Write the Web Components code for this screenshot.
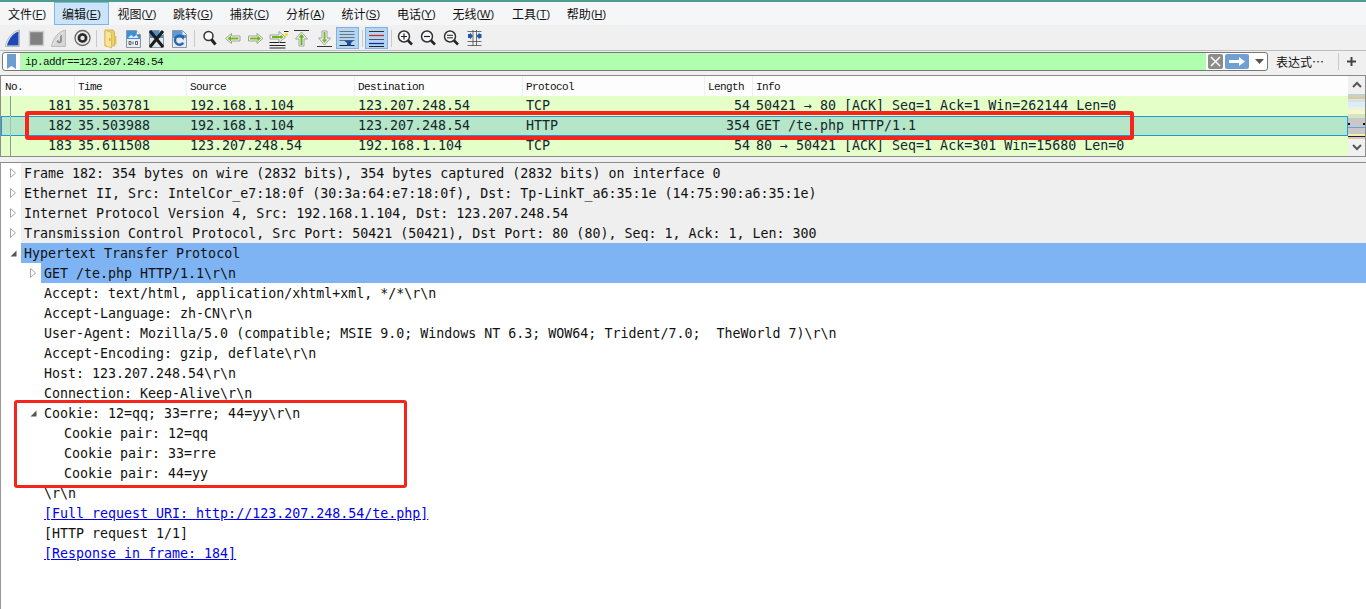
<!DOCTYPE html>
<html><head><meta charset="utf-8"><style>
html,body{margin:0;padding:0;background:#f0f0f0;overflow:hidden}
ws-app{font-family:"DejaVu Sans Mono",monospace}
</style></head><body>
<ws-app>
<ws-menubar>
<ws-menu key="F" style="margin-right:0">文件</ws-menu><ws-menu key="E" active>编辑</ws-menu><ws-menu key="V">视图</ws-menu><ws-menu key="G">跳转</ws-menu><ws-menu key="C">捕获</ws-menu><ws-menu key="A">分析</ws-menu><ws-menu key="S">统计</ws-menu><ws-menu key="Y">电话</ws-menu><ws-menu key="W" style="margin-right:1.8px">无线</ws-menu><ws-menu key="T">工具</ws-menu><ws-menu key="H">帮助</ws-menu>
</ws-menubar>
<ws-toolbar></ws-toolbar>
<ws-filter value="ip.addr==123.207.248.54"></ws-filter>
<ws-packets>
<ws-packet no="181" time="35.503781" src="192.168.1.104" dst="123.207.248.54" proto="TCP" len="54" info="50421 → 80 [ACK] Seq=1 Ack=1 Win=262144 Len=0"></ws-packet>
<ws-packet selected no="182" time="35.503988" src="192.168.1.104" dst="123.207.248.54" proto="HTTP" len="354" info="GET /te.php HTTP/1.1"></ws-packet>
<ws-packet no="183" time="35.611508" src="123.207.248.54" dst="192.168.1.104" proto="TCP" len="54" info="80 → 50421 [ACK] Seq=1 Ack=301 Win=15680 Len=0"></ws-packet>
</ws-packets>
<ws-tree>
<ws-row level="0" arrow="closed" shade>Frame 182: 354 bytes on wire (2832 bits), 354 bytes captured (2832 bits) on interface 0</ws-row>
<ws-row level="0" arrow="closed" shade>Ethernet II, Src: IntelCor_e7:18:0f (30:3a:64:e7:18:0f), Dst: Tp-LinkT_a6:35:1e (14:75:90:a6:35:1e)</ws-row>
<ws-row level="0" arrow="closed" shade>Internet Protocol Version 4, Src: 192.168.1.104, Dst: 123.207.248.54</ws-row>
<ws-row level="0" arrow="closed" shade>Transmission Control Protocol, Src Port: 50421 (50421), Dst Port: 80 (80), Seq: 1, Ack: 1, Len: 300</ws-row>
<ws-row level="0" arrow="open" hl>Hypertext Transfer Protocol</ws-row>
<ws-row level="1" arrow="closed" hl>GET /te.php HTTP/1.1\r\n</ws-row>
<ws-row level="1">Accept: text/html, application/xhtml+xml, */*\r\n</ws-row>
<ws-row level="1">Accept-Language: zh-CN\r\n</ws-row>
<ws-row level="1">User-Agent: Mozilla/5.0 (compatible; MSIE 9.0; Windows NT 6.3; WOW64; Trident/7.0;  TheWorld 7)\r\n</ws-row>
<ws-row level="1">Accept-Encoding: gzip, deflate\r\n</ws-row>
<ws-row level="1">Host: 123.207.248.54\r\n</ws-row>
<ws-row level="1">Connection: Keep-Alive\r\n</ws-row>
<ws-row level="1" arrow="open">Cookie: 12=qq; 33=rre; 44=yy\r\n</ws-row>
<ws-row level="2">Cookie pair: 12=qq</ws-row>
<ws-row level="2">Cookie pair: 33=rre</ws-row>
<ws-row level="2">Cookie pair: 44=yy</ws-row>
<ws-row level="1">\r\n</ws-row>
<ws-row level="1" link>[Full request URI: http://123.207.248.54/te.php]</ws-row>
<ws-row level="1">[HTTP request 1/1]</ws-row>
<ws-row level="1" link>[Response in frame: 184]</ws-row>
</ws-tree>
<ws-note style="left:25px;top:109px;width:1109px;height:29px;border-width:4px"></ws-note>
<ws-note style="left:14px;top:398px;width:393px;height:88px"></ws-note>
</ws-app>
<script>
function def(name, css, html){
  customElements.define(name, class extends HTMLElement{
    constructor(){super();this.attachShadow({mode:'open'});}
    connectedCallback(){
      const h = typeof html==='function'?html(this):html;
      this.shadowRoot.innerHTML='<style>'+css+'</style>'+h;
    }
  });
}
def('ws-app',`:host{display:flex;flex-direction:column;position:relative;width:1366px;height:609px;overflow:hidden;background:#f0f0f0;border-top:2px solid #4d9c8e;box-sizing:border-box}`,`<slot></slot>`);
def('ws-menubar',`:host{display:flex;height:23px;background:#f5f6f7;flex:none;align-items:stretch;box-sizing:border-box}`,`<slot></slot>`);
def('ws-menu',`:host{display:flex;align-items:center;padding:0 8px;margin-right:.8px;font:12px "Noto Sans CJK SC",sans-serif;color:#111;box-sizing:border-box;white-space:pre}
:host([active]){background:#cce4f7;outline:1px solid #7fb6e2;outline-offset:-1px}
.p{font:11px "Liberation Sans",sans-serif}
u{text-underline-offset:1px}`,
 e=>`<slot></slot><span class="p">(<u>${e.getAttribute('key')}</u>)</span>`);
const I={
fin:`<path d="M3.500 19.500C5 11 10 5 17.500 3V19.500Z" fill="#e8ecf0" stroke="#b4bcc4"/><path d="M5 18.500C7 11 11 6.500 16.500 4.500V18.500Z" fill="#2146b8"/>`,
stop:`<rect x="4.500" y="4.500" width="14" height="14" fill="#808080" stroke="#cfcfcf" stroke-width="1.500"/>`,
restart:`<path d="M3.500 19.500C5 11 10 5 17.500 3V19.500Z" fill="#d6d6d6" stroke="#bdbdbd"/><path d="M13 7.500v6c0 2.500-3.500 2.500-4-.5" stroke="#8a8a8a" stroke-width="1.800" fill="none"/><path d="M5 18L15 5" stroke="#eee"/>`,
opts:`<circle cx="11.500" cy="11" r="7.500" fill="#f2f2f2" stroke="#666" stroke-width="1.300"/><circle cx="11.500" cy="11" r="5" fill="#2a2a2a"/><circle cx="11.500" cy="11" r="5" fill="none" stroke="#bbb" stroke-dasharray="1.500 1.500" stroke-width=".8"/><circle cx="11.500" cy="11" r="2.200" fill="#e8e8e8"/>`,
open:`<path d="M6 3h8l1.500 2v14H6Z" fill="#edcf6a" stroke="#d6b458"/><path d="M6 3l6.500 2.500V21L6 18.500Z" fill="#f8e59a" stroke="#dcbc5c"/><path d="M15.500 9h2v8.500h-2Z" fill="#e6c25a"/><rect x="10" y="11" width="1.500" height="3" fill="#d9ae44"/>`,
save:`<path d="M4.500 3.500h10l4 4v13h-14Z" fill="#e6ebef" stroke="#8b98a2"/><path d="M5 4h9.500v4H18v4H5Z" fill="#3f8fd6"/><path d="M6 11l3-3 2.500 2 3-2 2 3Z" fill="#dcedfa"/><path d="M14.500 3.500v4h4" fill="#fff" stroke="#8b98a2"/><rect x="6" y="13.500" width="11" height="5" fill="#f4f6f7"/><path d="M7 14.500v3h2v-3ZM11 14.500v3M13.500 14.500v3h2v-3Z" fill="none" stroke="#445" stroke-width=".9"/>`,
close:`<path d="M4.500 3.500h10l4 4v13h-14Z" fill="#dfe6ec" stroke="#8b98a2"/><path d="M5 4h9.500v4H18v3H5Z" fill="#4f8fca"/><path d="M5 4L18 20M18 4L5 20" stroke="#1c1c1c" stroke-width="3"/>`,
reload:`<path d="M4.500 3.500h10l4 4v13h-14Z" fill="#e6ebef" stroke="#8b98a2"/><path d="M5 4h9.500v4H18v3H5Z" fill="#5d9ad8"/><path d="M15.500 11.200a4.500 4.500 0 1 0-.3 4.500" fill="none" stroke="#2a66b4" stroke-width="2.500"/><path d="M11.500 8.500l4.500-.5-.3 5Z" fill="#2a66b4"/>`,
find:`<circle cx="10.500" cy="9" r="4.500" fill="#f6f8f9" stroke="#333" stroke-width="1.500"/><path d="M13.500 12.500l4 5" stroke="#222" stroke-width="3"/>`,
back:`<path d="M4.500 11.500l6-5v2.500h8.500v5H10.500v2.500Z" fill="#f8f8f4" stroke="#a0a298"/><path d="M6.500 11.500l3.500-3v2h7.500v2H10v2Z" fill="#6cb81c"/>`,
fwd:`<path d="M19 11.500l-6-5v2.500H4.500v5H13v2.500Z" fill="#f8f8f4" stroke="#a0a298"/><path d="M17 11.500l-3.500-3v2H6v2h7.500v2Z" fill="#6cb81c"/>`,
goto:`<path d="M2.500 15.500h16M2.500 18.500h16M2.500 21h16" stroke="#222"/><path d="M3 8h9V4.500l6.500 5.500-6.500 5.500V12H3Z" fill="#f8f8f4" stroke="#a0a298"/><path d="M5 9h8.500V7.500l3 2.500-3 2.500V11H5Z" fill="#6cb81c"/><rect x="18" y="6" width="3" height="3" fill="#f4df3c"/><path d="M17 4.500h4.500" stroke="#222"/>`,
up:`<path d="M4 3.500h15" stroke="#333"/><path d="M11.500 5l6 7h-3.500v7H9v-7H5.500Z" fill="#f8f8f4" stroke="#a0a298"/><path d="M11.500 7l3 3.500h-2V18h-2v-7.500h-2Z" fill="#5fb21c"/>`,
down:`<path d="M4 19.500h15" stroke="#333"/><path d="M11.500 18l6-7h-3.500V4H9v7H5.500Z" fill="#f8f8f4" stroke="#a0a298"/><path d="M11.500 16l3-3.500h-2V5h-2v7.500h-2Z" fill="#7cb244"/>`,
auto:`<path d="M3.500 4.500h15M3.500 7.500h15M3.500 10.500h15M3.500 13.500h15" stroke="#6c7278"/><path d="M3.500 18.500h15" stroke="#222"/><path d="M8 13.500h9.500L15 16v2.500h-4V16Z" fill="#1d4f9c"/>`,
color:`<path d="M4 4.500h15" stroke="#333"/><path d="M4 8.500h15" stroke="#cc2b2b" stroke-width="1.300"/><path d="M4 12.500h15" stroke="#555"/><path d="M4 16.500h15" stroke="#23279c" stroke-width="1.300"/><path d="M4 19.500h15" stroke="#222"/>`,
zin:`<circle cx="10" cy="9.500" r="5.500" fill="#f7f9fa" stroke="#333" stroke-width="1.500"/><path d="M7 9.500h6M10 6.500v6" stroke="#222" stroke-width="1.200"/><path d="M14 13.500l4 4" stroke="#222" stroke-width="2.500"/>`,
zout:`<circle cx="10" cy="9.500" r="5.500" fill="#f7f9fa" stroke="#333" stroke-width="1.500"/><path d="M7 9.500h6" stroke="#222" stroke-width="1.200"/><path d="M14 13.500l4 4" stroke="#222" stroke-width="2.500"/>`,
znorm:`<circle cx="10" cy="9.500" r="5.500" fill="#f7f9fa" stroke="#333" stroke-width="1.500"/><path d="M7 8.300h6M7 10.800h6" stroke="#222"/><path d="M14 13.500l4 4" stroke="#222" stroke-width="2.500"/>`,
resize:`<path d="M4.500 4.500h14M4.500 14.500h14M4.500 18.500h14M10 3v16M13.500 3v16" stroke="#444" stroke-opacity=".75"/><path d="M5 7h2V5.500l3 3.500-3 3.500V11H5Z M18.500 7h-2V5.500l-3 3.500 3 3.500V11h2Z" fill="#1d5aa8"/>`
};
def('ws-toolbar',`:host{display:flex;align-items:center;height:26px;flex:none;box-sizing:border-box;padding:1px 0 0 2px;background:#f0f0f0;border-bottom:1px solid #bdbdbd}
.b{width:23px;height:22px;flex:none;display:flex;align-items:center;justify-content:center;box-sizing:border-box}
.b svg{width:23px;height:22px;display:block;flex:none}
.on{background:#b4d6f5;outline:1px solid #7fb0e0;outline-offset:-1px}
.s{width:1px;height:17px;background:#c9c9c9;margin:0 2.500px;flex:none}
.s.n{margin:0 2px}
.s.w{margin:0 3px}`,
()=>{const seq=['fin','stop','restart','opts','||','open','save','close','reload','|w','find','back','fwd','goto','up','down','auto*','|','color*','|','zin','zout','znorm','resize'];
return seq.map(k=>{if(k==='|')return '<i class="s"></i>';if(k==='|w')return '<i class="s w"></i>';if(k==='||')return '<i class="s n"></i>';const on=k.endsWith('*');k=k.replace('*','');
return `<div class="b${on?' on':''}"><svg viewBox="0 0 23 22">${I[k]}</svg></div>`}).join('')});
def('ws-filter',`:host{display:flex;align-items:center;height:24px;flex:none;box-sizing:border-box;padding:1px 0 4px 2px;background:#f0f0f0}
.box{flex:none;width:1266px;height:19px;box-sizing:border-box;border:1px solid #777;border-radius:3px;background:#fff;display:flex;align-items:center;overflow:hidden}
.bm{width:18px;display:flex;justify-content:center;flex:none;border-right:1px solid #ddd;height:100%;align-items:center;box-sizing:border-box}
.txt{flex:1;align-self:stretch;background:#afffaf;font:11px/19px "Liberation Mono",monospace;letter-spacing:-.6px;padding-left:4px;color:#111}
.x{width:15px;height:15px;background:#8c8c88;border-radius:2px;margin:0 2px;flex:none}
.go{width:24px;height:15px;background:#6f9fd3;border-radius:2px;flex:none;margin-right:2px}
.dd{flex:none;width:16px;display:flex;justify-content:center}
.ex{font:12px "Noto Sans CJK SC",sans-serif;width:62px;margin-left:8px;flex:none;color:#111}
.sep{width:1px;height:17px;background:#c9c9c9;flex:none}
.plus{width:25px;flex:none;display:flex;justify-content:center}`,
e=>`<div class="box"><div class="bm"><svg width="9" height="15"><path d="M0 0h9v15l-4.500-3L0 15Z" fill="#6d9ed2"/></svg></div>
<div class="txt">${e.getAttribute('value')}</div>
<div class="x"><svg width="15" height="15" style="display:block"><path d="M3 3l9 9M12 3l-9 9" stroke="#fff" stroke-width="1.500"/></svg></div>
<div class="go"><svg width="24" height="15" style="display:block"><path d="M4 6h10V3l6 4.500-6 4.500V9H4Z" fill="#fff"/></svg></div>
<div class="dd"><svg width="9" height="5" style="display:block"><path d="M0 0h9L4.500 5Z" fill="#555"/></svg></div></div>
<div class="ex">表达式…</div><div class="sep"></div>
<div class="plus"><svg width="9" height="9" style="display:block"><path d="M4.500 0v9M0 4.500h9" stroke="#444" stroke-width="2"/></svg></div>`);
def('ws-packets',`:host{display:grid;grid-template-columns:1fr 17px;grid-template-rows:20px 60px;height:82px;flex:none;box-sizing:border-box;background:#fff;border:1px solid #8c8c8c}
.h{display:grid;grid-template-columns:74px 112px 168px 168px 182px 48px 1fr;font:11px/22px "Liberation Mono",monospace;letter-spacing:-.6px;color:#111;background:#fdfdfd;height:20px}
.h span{border-right:1px solid #e9eff6;padding-left:3px;white-space:pre;box-sizing:border-box}
.h .n{padding-left:4px}.h span:last-child{border:0}
.rows{background:#e4ffc7;display:block;min-width:0;grid-column:1;grid-row:2}
.sb{grid-row:1/3;grid-column:2;background:#f0f0f0;display:flex;flex-direction:column;box-sizing:border-box}
.c{height:17px;display:flex;align-items:center;justify-content:center;flex:none}
.c.d{margin-top:auto}
.m{height:45px;width:17px;flex:none;display:block;margin-top:1px}`,
()=>`<div class="h"><span class="n">No.</span><span>Time</span><span>Source</span><span>Destination</span><span>Protocol</span><span>Length</span><span>Info</span></div>
<div class="sb"><div class="c"><svg width="10" height="7"><path d="M1 6l4-4 4 4" stroke="#555" stroke-width="2" fill="none"/></svg></div>
<svg class="m" viewBox="0 0 17 45"><rect width="17" height="45" fill="#e4ffc7"/><rect width="17" height="3" fill="#c4d2c6"/><rect y="3" width="17" height="2" fill="#d8c8a8"/><rect y="5" width="17" height="1" fill="#ece6c0"/><rect y="6" width="17" height="2" fill="#d4e0ec"/><rect y="8" width="17" height="5" fill="#dcecf8"/><rect y="13" width="17" height="3" fill="#ecf4d8"/><rect y="16" width="17" height="4" fill="#f4f8d0"/><rect y="20" width="17" height="4" fill="#d8e4c0"/><rect y="24" width="17" height="16" fill="#c8c8c8"/><rect y="33" width="17" height="1" fill="#6aa0d8"/><rect y="29" width="2" height="2" fill="#111"/><rect x="15" y="29" width="2" height="2" fill="#111"/><rect y="40" width="17" height="2" fill="#f0f0b0"/><rect y="42" width="17" height="1" fill="#222"/><rect y="43" width="17" height="2" fill="#d8c8b8"/></svg>
<div class="c d"><svg width="10" height="7"><path d="M1 1l4 4 4-4" stroke="#555" stroke-width="2" fill="none"/></svg></div></div>
<div class="rows"><slot></slot></div>`);
customElements.define('ws-packet',class extends HTMLElement{
  constructor(){super();this.attachShadow({mode:'open'});}
  connectedCallback(){const g=k=>this.getAttribute(k);
  this.shadowRoot.innerHTML=`<style>:host{display:block;height:20px;box-sizing:border-box;background:#e4ffc7;color:#12272e;font:13.3px/19px "DejaVu Sans Mono",monospace;position:relative}
:host([selected]){background:#b6e6c8;outline:1px solid #1f9ad6;outline-offset:-1px}
:host([selected]) .v{background:#a8c0b8}
.r{display:grid;grid-template-columns:71px 6px 112px 168px 168px 180px 44px 6px 1fr;height:20px;white-space:pre}
.a{text-align:right}
.v{position:absolute;left:9px;top:0;bottom:0;width:1px;background:#8a9a8a}</style>
<div class="v"></div><div class="r"><span class="a">${g('no')}</span><span></span><span>${g('time')}</span><span>${g('src')}</span><span>${g('dst')}</span><span>${g('proto')}</span><span class="a">${g('len')}</span><span></span><span>${g('info')}</span></div>`;}
});
def('ws-tree',`:host{display:block;flex:1;margin-top:5px;background:#fff;border-top:1px solid #8c8c8c;border-left:1px solid #9a9a9a;min-height:0;overflow:hidden}`,`<slot></slot>`);
customElements.define('ws-row',class extends HTMLElement{
  constructor(){super();this.attachShadow({mode:'open'});}
  connectedCallback(){const lv=+this.getAttribute('level'),a=this.getAttribute('arrow');
  const ind=20*lv;
  const ar=a==='closed'?`<svg width="6" height="10" style="display:block"><path d="M.5 .5l5 4.500-5 4.500Z" fill="#fff" stroke="#a6a6a6"/></svg>`:a==='open'?`<svg width="7" height="7" style="display:block"><path d="M6.500 .5v6H.5Z" fill="#555"/></svg>`:'';
  this.shadowRoot.innerHTML=`<style>:host{display:flex;height:20px;font:13.3px/22px "DejaVu Sans Mono",monospace;color:#111;white-space:pre;box-sizing:border-box;padding-left:${ind+8}px}
.ar{width:12px;flex:none;display:flex;align-items:center;padding-left:1px;box-sizing:border-box}
.t{flex:1;padding-left:3px;min-width:0;height:20px}
:host([shade]) .t{background:#efefef}
:host([hl]) .t{background:#7eb4f4}
:host([link]) .t span{color:#0000ee;text-decoration:underline}</style>
<div class="ar">${ar}</div><div class="t"><span><slot></slot></span></div>`;}
});
def('ws-note',`:host{display:block;position:absolute;box-sizing:border-box;border:3px solid #f5251c;border-radius:3px;pointer-events:none}`,``);
</script>
</body></html>
